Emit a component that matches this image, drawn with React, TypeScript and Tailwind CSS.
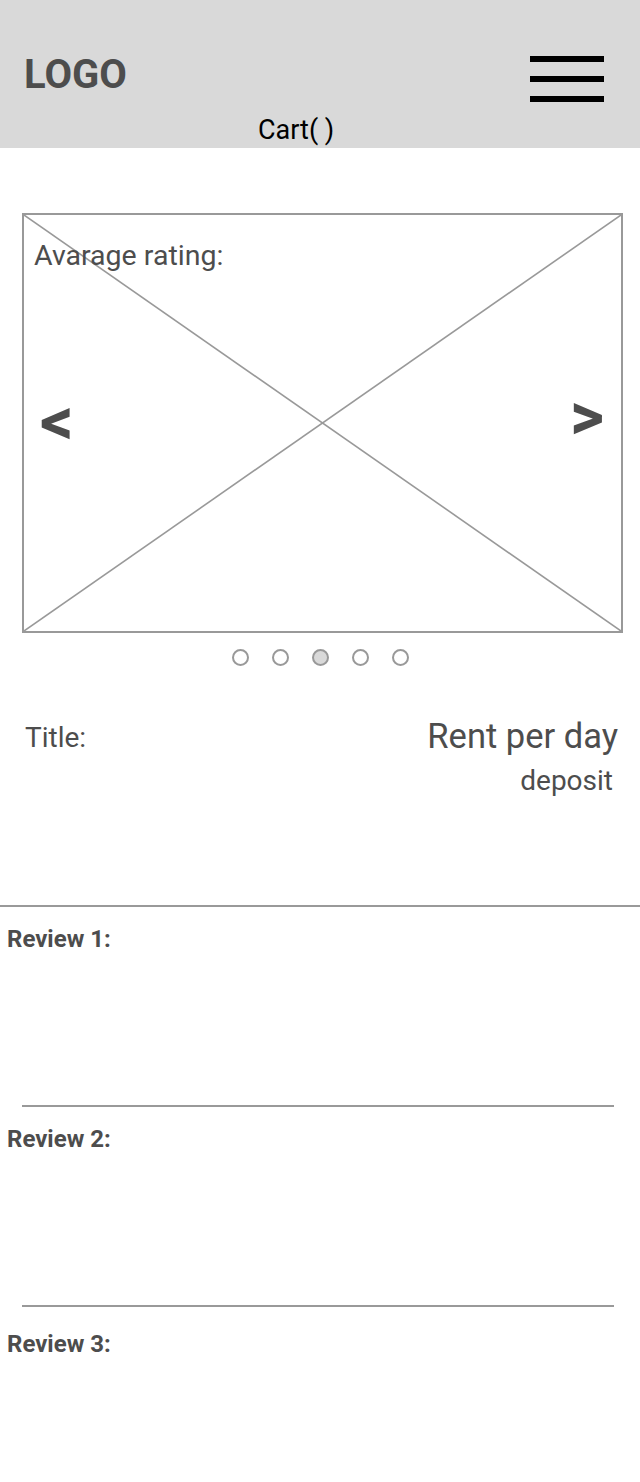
import React from "react";

function Review({ label, pt }: { label: string; pt: string }) {
  return (
    <div className={`h-[198px] pl-[7px] ${pt}`}>
      <div className="text-[24px] leading-none font-bold">{label}</div>
    </div>
  );
}

export default function App() {
  return (
    <div className="w-[640px] min-h-[1482px] bg-white font-['Roboto',sans-serif] text-[#4d4d4d]">
      <header className="h-[148px] bg-[#d9d9d9]">
        <div className="flex justify-between items-start pl-[24px] pr-[36px] pt-[55px]">
          <div className="text-[40px] leading-none font-bold">LOGO</div>
          <div className="mt-[1px] flex flex-col gap-[14px]">
            <div className="w-[74px] h-[6px] bg-black" />
            <div className="w-[74px] h-[6px] bg-black" />
            <div className="w-[74px] h-[6px] bg-black" />
          </div>
        </div>
        <div className="pl-[258px] mt-[15px] text-[27px] leading-none text-black">Cart( )</div>
      </header>

      <div className="pt-[65px] pl-[22px]">
        <div className="relative w-[601px] h-[420px] border-2 border-[#999] flex flex-col">
          <svg className="absolute inset-0 w-full h-full" viewBox="0 0 597 416" preserveAspectRatio="none">
            <line x1="0" y1="0" x2="597" y2="416" stroke="#999" strokeWidth="1.6" />
            <line x1="597" y1="0" x2="0" y2="416" stroke="#999" strokeWidth="1.6" />
          </svg>
          <div className="relative pl-[10px] pt-[27px] text-[28.5px] leading-none">Avarage rating:</div>
          <div className="relative flex justify-between items-start pl-[16px] pr-[17px] mt-[113.5px]">
            <span className="mt-[5px] text-[66px] leading-none font-bold">&lt;</span>
            <span className="text-[66px] leading-none font-bold">&gt;</span>
          </div>
        </div>
      </div>

      <div className="mt-[16px] flex justify-center gap-[23px]">
        <div className="w-[17px] h-[17px] rounded-full border-2 border-[#999]" />
        <div className="w-[17px] h-[17px] rounded-full border-2 border-[#999]" />
        <div className="w-[17px] h-[17px] rounded-full border-2 border-[#999] bg-[#d9d9d9]" />
        <div className="w-[17px] h-[17px] rounded-full border-2 border-[#999]" />
        <div className="w-[17px] h-[17px] rounded-full border-2 border-[#999]" />
      </div>

      <div className="mt-[53px] h-[186px] flex justify-between items-start pl-[25px] pr-[22px]">
        <div className="mt-[5px] text-[28px] leading-none">Title:</div>
        <div className="flex flex-col items-end">
          <div className="text-[34.5px] leading-none">Rent per day</div>
          <div className="mt-[13.5px] mr-[5px] text-[28px] leading-none">deposit</div>
        </div>
      </div>

      <div className="h-[2px] bg-[#999]" />
      <Review label="Review 1:" pt="pt-[20px]" />
      <div className="ml-[22px] w-[592px] h-[2px] bg-[#999]" />
      <Review label="Review 2:" pt="pt-[20px]" />
      <div className="ml-[22px] w-[592px] h-[2px] bg-[#999]" />
      <Review label="Review 3:" pt="pt-[25px]" />
    </div>
  );
}
